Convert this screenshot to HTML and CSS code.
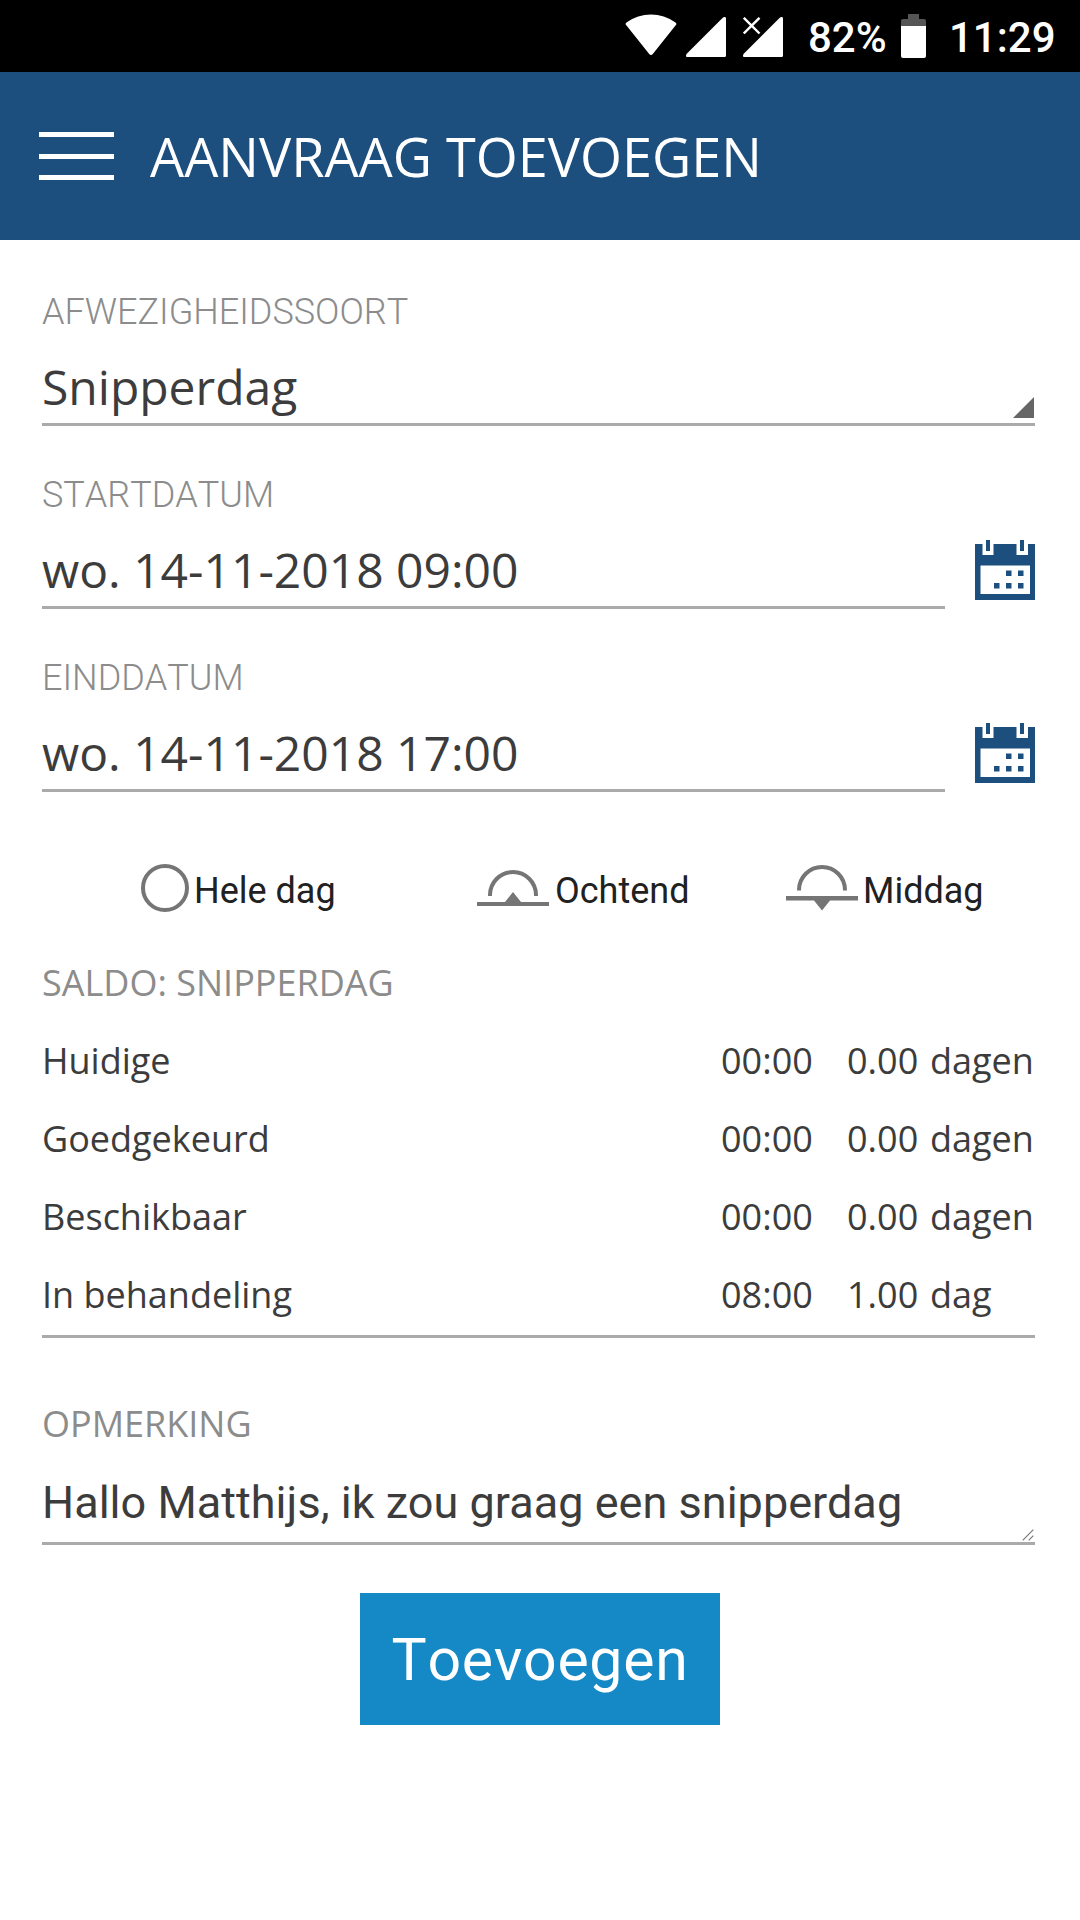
FILE: index.html
```html
<!DOCTYPE html>
<html lang="nl">
<head>
  <meta charset="UTF-8" />
  <title>Aanvraag toevoegen</title>
  <meta name="viewport" content="width=device-width, initial-scale=1" />
  <link rel="stylesheet" href="styles.css">
</head>
<body>
  <div class="status-bar">
    <svg class="wifi" width="52" height="42" viewBox="0 0 52 42">
      <path d="M1.5 11.5Q-.3 9.800 1.500 8.500C16-2.200 36-2.200 50.500 8.500Q52.300 9.800 50.500 11.500L28 39.800Q26 42.200 24 39.800Z" fill="#fff"/>
    </svg>
    <svg class="signal" width="40" height="40" viewBox="0 0 40 40">
      <path d="M36.500 1Q40-1.500 40 2V38.500Q40 40 38.500 40H2Q-1.500 40 1 36.500Z" fill="#fff"/>
    </svg>
    <svg class="signal-off" width="40" height="40" viewBox="0 0 40 40">
      <path d="M36.500 1Q40-1.500 40 2V38.500Q40 40 38.500 40H2Q-1.500 40 1 36.500Z" fill="#fff"/>
      <path d="M.8 .8L16.500 16.500M16.500 .8L.8 16.500" stroke="#fff" stroke-width="2.400"/>
    </svg>
    <span class="battery-level">82%</span>
    <svg class="battery" width="25" height="44" viewBox="0 0 25 44">
      <path d="M7 0H18V5H23Q25 5 25 7V12H0V7Q0 5 2 5H7Z" fill="#555"/>
      <path d="M0 12H25V42Q25 44 23 44H2Q0 44 0 42Z" fill="#fff"/>
    </svg>
    <span class="clock">11:29</span>
  </div>

  <header class="header">
    <div class="menu" role="button" aria-label="Menu">
      <span></span>
      <span></span>
      <span></span>
    </div>
    <h1>AANVRAAG TOEVOEGEN</h1>
  </header>

  <main class="form">
    <div class="field">
      <div class="label">AFWEZIGHEIDSSOORT</div>
      <div class="value select">Snipperdag</div>
    </div>

    <div class="field">
      <div class="label">STARTDATUM</div>
      <div class="date-row">
        <div class="value">wo. 14-11-2018 09:00</div>
        <svg class="calendar" width="60" height="60" viewBox="0 0 60 60">
          <path d="M0 4H7.500V15H18.500V4H41.500V15H53V4H60V60H0ZM5.500 25.500V54H55V25.500Z" fill="#1c4e7e" fill-rule="evenodd"/>
          <path d="M11 0h4v11h-4zM45 0h4v11h-4zM31 30.500h5.500v5.500H31zM43 30.500h5.500v5.500H43zM19 43h5.500v5.500H19zM31 43h5.500v5.500H31zM43 43h5.500v5.500H43z" fill="#1c4e7e"/>
        </svg>
      </div>
    </div>

    <div class="field">
      <div class="label">EINDDATUM</div>
      <div class="date-row">
        <div class="value">wo. 14-11-2018 17:00</div>
        <svg class="calendar" width="60" height="60" viewBox="0 0 60 60">
          <path d="M0 4H7.500V15H18.500V4H41.500V15H53V4H60V60H0ZM5.500 25.500V54H55V25.500Z" fill="#1c4e7e" fill-rule="evenodd"/>
          <path d="M11 0h4v11h-4zM45 0h4v11h-4zM31 30.500h5.500v5.500H31zM43 30.500h5.500v5.500H43zM19 43h5.500v5.500H19zM31 43h5.500v5.500H31zM43 43h5.500v5.500H43z" fill="#1c4e7e"/>
        </svg>
      </div>
    </div>

    <div class="day-parts">
      <div class="day-part">
        <svg width="48" height="60" viewBox="0 0 48 60">
          <circle cx="24" cy="30" r="22" fill="none" stroke="#757575" stroke-width="4"/>
        </svg>
        <span>Hele dag</span>
      </div>
      <div class="day-part morning">
        <svg width="72" height="60" viewBox="0 0 72 60">
          <path d="M13 38V37A23 23 0 0 1 59 37V38" fill="none" stroke="#757575" stroke-width="4"/>
          <path d="M0 44H28L36 34L44 44H72V48H0Z" fill="#757575"/>
        </svg>
        <span>Ochtend</span>
      </div>
      <div class="day-part">
        <svg width="72" height="60" viewBox="0 0 72 60">
          <path d="M13 32.500V32A23 23 0 0 1 59 32V32.500" fill="none" stroke="#757575" stroke-width="4"/>
          <path d="M0 38H72V42.500H44L36 52.500L28 42.500H0Z" fill="#757575"/>
        </svg>
        <span>Middag</span>
      </div>
    </div>

    <div class="balance">
      <div class="balance-title">SALDO: SNIPPERDAG</div>
      <div class="balance-row"><span>Huidige</span><span>00:00</span><span>0.00</span><span>dagen</span></div>
      <div class="balance-row"><span>Goedgekeurd</span><span>00:00</span><span>0.00</span><span>dagen</span></div>
      <div class="balance-row"><span>Beschikbaar</span><span>00:00</span><span>0.00</span><span>dagen</span></div>
      <div class="balance-row"><span>In behandeling</span><span>08:00</span><span>1.00</span><span>dag</span></div>
    </div>

    <div class="remark">
      <div class="remark-title">OPMERKING</div>
      <div class="remark-text">Hallo Matthijs, ik zou graag een snipperdag
        <svg class="resize" width="12" height="12" viewBox="0 0 12 12">
          <path d="M.7 11.300L11.300 .7M6.700 11.300L11.300 6.700" stroke="#777" stroke-width="1.200"/>
        </svg>
      </div>
    </div>

    <button class="submit">Toevoegen</button>
  </main>
</body>
</html>
```
FILE: styles.css
```css
* {
  box-sizing: border-box;
}
body {
  margin: 0;
  background: #fff;
  color: #3c3c3c;
  font-family: 'Open Sans', sans-serif;
}
svg {
  display: block;
  flex: none;
}

/* Android status bar */
.status-bar {
  display: flex;
  height: 72px;
  padding-left: 625px;
  background: #000;
  color: #fff;
  font: 500 42px/75px Roboto, sans-serif;
  white-space: nowrap;
}
.wifi {
  margin-top: 14px;
}
.signal {
  margin: 17px 0 0 9px;
}
.signal-off {
  margin: 17px 0 0 17px;
}
.battery-level {
  width: 93px;
  margin-left: 25px;
}
.battery {
  margin-top: 14px;
}
.clock {
  margin-left: 23px;
}

.header {
  display: flex;
  height: 168px;
  padding-left: 39px;
  background: #1c4e7e;
  color: #fff;
}
.menu {
  display: flex;
  flex-direction: column;
  justify-content: space-between;
  width: 75px;
  height: 48px;
  margin: 60px 36px 0 0;
}
.menu span {
  height: 5px;
  background: #fff;
}
.header h1 {
  margin: 0;
  font-size: 54px;
  font-weight: 400;
  line-height: 168px;
}

.form {
  padding: 39px 45px 0 42px;
}
.field {
  margin-bottom: 36px;
}
.label {
  height: 64px;
  color: #8c8c8c;
  font: 300 36px/66px Roboto, sans-serif;
  font-kerning: none;
}
.value {
  flex: 1;
  height: 83px;
  padding-top: 7px;
  border-bottom: 3px solid #aaa;
  font-size: 48px;
  line-height: 73px;
}
.select {
  position: relative;
}
.select::after {
  content: '';
  position: absolute;
  right: 1px;
  bottom: 5px;
  border-left: 21px solid transparent;
  border-bottom: 21px solid #666;
}
.date-row {
  display: flex;
  gap: 30px;
}
.calendar {
  margin-top: 14px;
}

.day-parts {
  display: grid;
  grid-template-columns: 336px 309px auto;
  margin: 66px 0 20px;
  padding-left: 99px;
  color: #212121;
  font: 36px/66px Roboto, sans-serif;
}
.day-part {
  display: flex;
  gap: 5px;
}
.morning {
  gap: 6px;
}

.balance {
  padding-bottom: 1px;
  border-bottom: 3px solid #aaa;
  font-size: 36px;
  line-height: 78px;
}
.balance-title,
.remark-title {
  color: #8c8c8c;
}
.balance-row {
  display: grid;
  grid-template-columns: 679px 126px 83px auto;
}

.remark {
  margin-top: 47px;
  font-size: 36px;
  line-height: 78px;
}
.remark-text {
  position: relative;
  height: 82px;
  border-bottom: 3px solid #aaa;
  font: 45px/80px Roboto, sans-serif;
  letter-spacing: 0.03px;
}
.resize {
  position: absolute;
  right: 1px;
  bottom: 1px;
}

.submit {
  display: block;
  width: 360px;
  height: 132px;
  margin: 48px 0 0 318px;
  padding: 2px 0 0;
  border: none;
  background: #1588c6;
  color: #fff;
  font: 59px/130px Roboto, sans-serif;
  font-kerning: none;
  letter-spacing: 0.7px;
}
```
